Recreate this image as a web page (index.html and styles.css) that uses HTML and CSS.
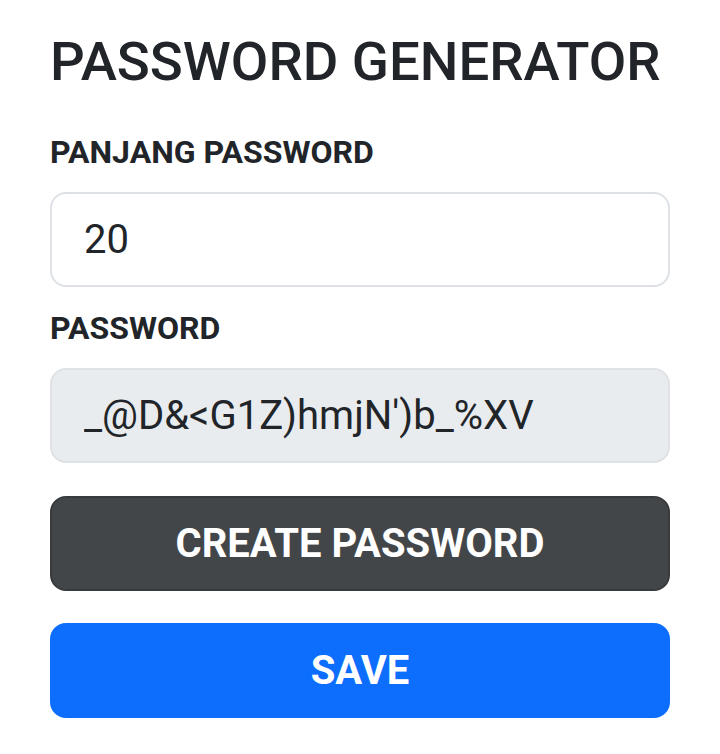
FILE: index.html
```html
<!DOCTYPE html>
<html lang="id">
<head>
<meta charset="utf-8">
<title>Password Generator</title>
<link rel="stylesheet" href="styles.css">
</head>
<body>
<main class="container">
  <h1 class="title">PASSWORD GENERATOR</h1>
  <label class="label" for="len">PANJANG PASSWORD</label>
  <input class="field" id="len" type="text" value="20">
  <label class="label label-gap" for="pwd">PASSWORD</label>
  <input class="field field-readonly" id="pwd" type="text" value="_@D&amp;&lt;G1Z)hmjN')b_%XV" readonly>
  <button class="btn btn-dark" type="button">CREATE PASSWORD</button>
  <button class="btn btn-primary" type="button">SAVE</button>
</main>
</body>
</html>
```

FILE: styles.css
```css
html, body {
  margin: 0;
  padding: 0;
  background: #ffffff;
}

body {
  font-family: Roboto, "Liberation Sans", sans-serif;
  color: #212529;
}

.container {
  width: 620px;
  padding: 30px 0 0 50px;
  display: flex;
  flex-direction: column;
}

.title {
  margin: 0;
  font-size: 54.5px;
  font-weight: 500;
  line-height: 62px;
  color: #212529;
}

.label {
  display: block;
  margin-top: 39px;
  font-size: 32px;
  font-weight: 700;
  line-height: 42px;
  color: #212529;
}

.label-gap {
  margin-top: 20px;
}

.field {
  box-sizing: border-box;
  margin-top: 19px;
  width: 620px;
  height: 95px;
  padding: 0 32px;
  border: 2px solid #dee2e6;
  border-radius: 16px;
  background: #ffffff;
  font-family: Roboto, "Liberation Sans", sans-serif;
  font-size: 40px;
  color: #212529;
  outline: none;
}

.field-readonly {
  background: #e9ecef;
}

.btn {
  box-sizing: border-box;
  width: 620px;
  height: 95px;
  border-radius: 16px;
  font-family: Roboto, "Liberation Sans", sans-serif;
  font-size: 40px;
  font-weight: 700;
  color: #ffffff;
  cursor: pointer;
}

.btn-dark {
  margin-top: 33px;
  background: #424649;
  border: 2px solid #373b3e;
}

.btn-primary {
  margin-top: 32px;
  background: #0d6efd;
  border: 2px solid #0d6efd;
}
```
